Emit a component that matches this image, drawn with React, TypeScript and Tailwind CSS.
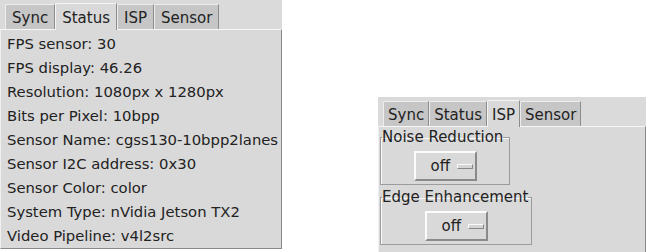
import React from "react"

const font = { fontFamily: '"DejaVu Sans", sans-serif' }

const tabs = ["Sync", "Status", "ISP", "Sensor"]

function Tab({ label, active, compact }: { label: string; active: boolean; compact?: boolean }) {
  if (active) {
    return (
      <div
        className={
          "h-[27px] pt-[3px] -mb-px relative z-10 bg-[#d9d9d9] border-l border-t border-l-[#f4f4f4] border-t-[#f4f4f4] border-r border-r-[#8c8c8c] rounded-tl-[2px] " +
          (compact ? "px-[4px]" : "px-[6px]")
        }
      >
        {label}
      </div>
    )
  }
  return (
    <div
      className={
        "h-[25px] pt-[2px] bg-[#c6c6c6] border-l border-t border-l-[#ededed] border-t-[#ededed] border-r border-r-[#8c8c8c] rounded-tl-[2px] " +
        (compact ? "px-[4px]" : "px-[6px]")
      }
    >
      {label}
    </div>
  )
}

function Notebook({
  selected,
  compact,
  className,
  children,
}: {
  selected: string
  compact?: boolean
  className: string
  children: React.ReactNode
}) {
  return (
    <div className={"flex flex-col bg-[#dadada] " + className}>
      <div className="flex items-end h-[29px] pl-[5px] shrink-0">
        {tabs.map((t) => (
          <Tab key={t} label={t} active={t === selected} compact={compact} />
        ))}
      </div>
      <div className="flex-1 bg-[#d9d9d9] border-t border-t-[#f7f7f7] border-r border-r-[#8a8a8a] border-b border-b-[#8a8a8a] border-l border-l-[#f0f0f0]">
        {children}
      </div>
    </div>
  )
}

function OptionButton() {
  return (
    <div className="flex items-center h-[30px] w-[63px] pl-[15px] gap-[7px] bg-[#d9d9d9] border-2 border-t-[#fbfbfb] border-l-[#fbfbfb] border-r-[#8a8a8a] border-b-[#8a8a8a]">
      <span>off</span>
      <span className="block w-[16px] h-[5px] bg-[#d4d4d4] border border-t-[#fbfbfb] border-l-[#fbfbfb] border-r-[#888] border-b-[#888]" />
    </div>
  )
}

function Group({ title, width }: { title: string; width: string }) {
  return (
    <fieldset
      className={
        "border border-[#9c9c9c] shadow-[inset_1px_1px_0_#fafafa] pb-[3px] pt-[5px] flex justify-center " +
        width
      }
    >
      <legend className="leading-[18px] px-0 ml-[1px]">{title}</legend>
      <div className="flex justify-center w-full">
        <OptionButton />
      </div>
    </fieldset>
  )
}

const status = [
  "FPS sensor: 30",
  "FPS display: 46.26",
  "Resolution: 1080px x 1280px",
  "Bits per Pixel: 10bpp",
  "Sensor Name: cgss130-10bpp2lanes",
  "Sensor I2C address: 0x30",
  "Sensor Color: color",
  "System Type: nVidia Jetson TX2",
  "Video Pipeline: v4l2src",
]

export default function App() {
  return (
    <div
      className="w-[652px] h-[252px] bg-white flex items-start text-[15px] text-[#222] overflow-hidden"
      style={font}
    >
      <Notebook selected="Status" className="w-[282px] h-[248px]">
        <div className="flex flex-col pl-[6px] pt-[2px] text-[14.8px]">
          {status.map((s) => (
            <div key={s} className="h-[24px] leading-[24px] whitespace-nowrap">
              {s}
            </div>
          ))}
        </div>
      </Notebook>

      <Notebook selected="ISP" compact className="ml-[96px] mt-[97px] w-[268px] h-[160px]">
        <div className="flex flex-col items-start gap-[3px] pl-[1px] pt-[1px]">
          <Group title="Noise Reduction" width="w-[130px]" />
          <Group title="Edge Enhancement" width="w-[152px]" />
        </div>
      </Notebook>
    </div>
  )
}
